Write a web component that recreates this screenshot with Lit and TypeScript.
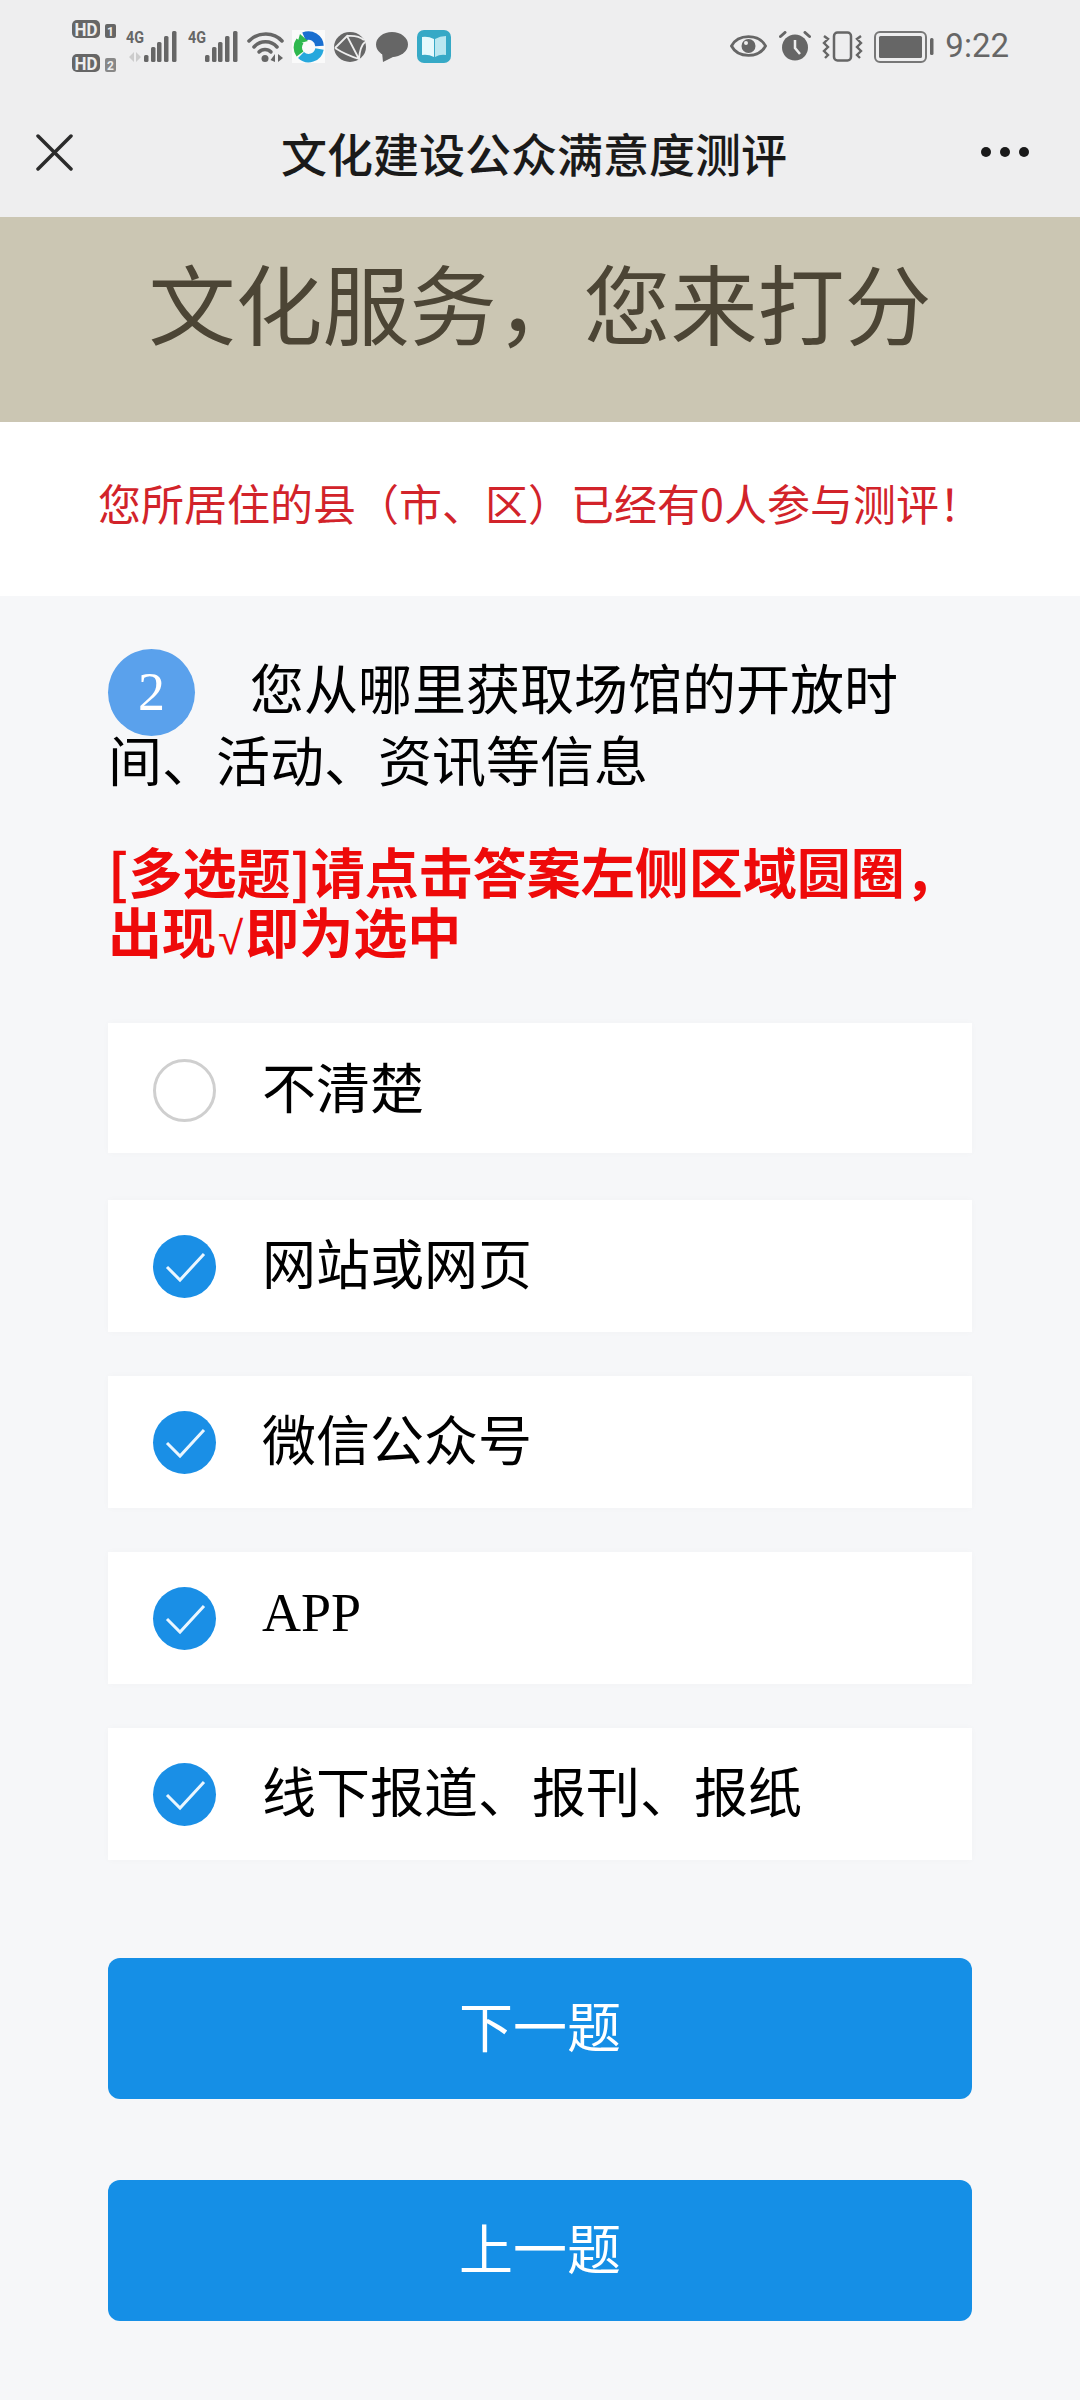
import { LitElement, html, css, svg } from "lit";
import { customElement } from "lit/decorators.js";

const options = [
  { label: "不清楚", checked: false },
  { label: "网站或网页", checked: true },
  { label: "微信公众号", checked: true },
  { label: "APP", checked: true },
  { label: "线下报道、报刊、报纸", checked: true },
];

const bars = (x: number) => {
  const offs = [0, 7, 13, 20, 28];
  const hs = [7, 15, 20, 26, 31];
  return offs.map(
    (o, i) => svg`<rect x=${x + o} y=${32 - hs[i]} width="4.5" height=${hs[i]} rx="1.5"/>`
  );
};

const fourG = svg`<text x="0" y="13" font-family="Roboto" font-size="17" font-weight="700" textLength="18" lengthAdjust="spacingAndGlyphs">4G</text>`;

@customElement("app-root")
export class AppRoot extends LitElement {
  static styles = css`
    :host { display: block; width: 1080px; height: 2400px; background: #f6f7f9; overflow: hidden;
      font-family: "Liberation Serif", "Noto Sans CJK SC", serif; color: #000; }
    .top { height: 217px; background: #eeeeef; display: flex; flex-direction: column; }
    .status { height: 88px; flex: none; display: flex; justify-content: space-between; align-items: flex-start; padding: 18px 71px 0 72px; box-sizing: border-box; color: #666; }
    .status svg { display: block; fill: #666; flex: none; }
    .time { font: 33px "Roboto", sans-serif; color: #666; line-height: 40px; margin-left: 11px; margin-top: 8px; }
    .sr, .sl { display: flex; align-items: flex-start; }
    .sig1 { margin-left: 10px; margin-top: 6px; }
    .sig2 { margin-left: 10px; margin-top: 6px; }
    .wifi { margin-left: 9px; margin-top: 13px; }
    .app { margin-left: 7px; margin-top: 12px; }
    .globe { margin-left: 9px; margin-top: 14px; }
    .chat { margin-left: 10px; margin-top: 14px; }
    .book { margin-left: 9px; margin-top: 12px; }
    .eye { margin-top: 15px; }
    .alarm { margin-left: 12px; margin-top: 13px; }
    .vib { margin-left: 11px; margin-top: 13px; }
    .bat { margin-left: 11px; margin-top: 13px; }
    .nav { flex: 1; display: flex; align-items: center; justify-content: space-between; padding: 0 51px 1px 36px; }
    .nav h1 { margin: 0 0 0 14px; font: 500 46px "Noto Sans CJK SC", sans-serif; color: #1a1a1a; line-height: 60px; }
    .banner { height: 205px; box-sizing: border-box; padding-bottom: 38px; background: #cbc6b3; color: #4c4535; font: 400 87px "Noto Sans CJK SC", sans-serif; display: flex; align-items: center; justify-content: center; }
    .notice { height: 174px; box-sizing: border-box; padding-bottom: 14px; background: #fff; color: #d2232a; font: 43px "Noto Sans CJK SC", sans-serif; display: flex; align-items: center; justify-content: center; }
    .body { padding: 52px 108px 0; }
    .q { font-size: 54px; line-height: 72px; position: relative; padding-top: 8px; text-indent: 142px; }
    .num { position: absolute; left: 0; top: 1px; width: 87px; height: 87px; border-radius: 50%; background: #5aa1ec; color: #fff; font-size: 54px; text-indent: 0; display: flex; align-items: center; justify-content: center; padding-bottom: 2px; box-sizing: border-box; }
    .warn { margin-top: 41px; font: 700 54px/60px "Noto Sans CJK SC", sans-serif; color: #ee0a0a; }
    .warn .root { font-family: "Liberation Sans", sans-serif; font-weight: 400; font-size: 46px; margin: 0 2px; }
    .list { margin-top: 55px; display: flex; flex-direction: column; gap: 44px; }
    .opt { height: 132px; box-sizing: border-box; background: #fff; display: flex; align-items: center; padding-left: 45px; font-size: 54px; gap: 46px; box-shadow: 0 0 8px rgba(0,0,0,.025); }
    .opt:first-child { height: 130px; margin-bottom: 3px; padding-top: 5px; }
    .opt .label { padding-bottom: 10px; }
    .mark { width: 63px; height: 63px; flex: none; box-sizing: border-box; border-radius: 50%; border: 3px solid #cfcfcf; }
    .mark.on { background: #1a8fe6; border: 0; }
    .mark svg { display: block; }
    .btns { margin-top: 98px; display: flex; flex-direction: column; gap: 81px; }
    .btn { height: 141px; box-sizing: border-box; padding-bottom: 8px; border-radius: 12px; background: #158fe6; color: #fff; font-size: 54px; display: flex; align-items: center; justify-content: center; }
  `;

  render() {
    return html`
      <div class="top">
        <div class="status">
          <div class="sl">
            <svg width="44" height="56" viewBox="0 0 44 56">
              <rect x="0" y="2" width="28" height="18" rx="5"/><rect x="33" y="6" width="11" height="14" rx="2"/>
              <rect x="0" y="36" width="28" height="18" rx="5"/><rect x="33" y="40" width="11" height="14" rx="2" fill="#888"/>
              <g fill="#eee" font-family="Roboto" font-size="18" font-weight="700"><text x="2.500" y="17.500" textLength="23" lengthAdjust="spacingAndGlyphs">HD</text><text x="2.500" y="51.500" textLength="23" lengthAdjust="spacingAndGlyphs">HD</text></g>
              <g fill="#eee" font-family="Roboto" font-size="12" font-weight="700"><text x="35" y="17.500">1</text><text x="35" y="51.500">2</text></g>
            </svg>
            <svg class="sig1" width="52" height="39" viewBox="0 -6 52 39">
              ${fourG}
              <path d="M8 22 V32 L3 27z M10 22 V32 L15 27z" fill="#ccc"/>
              ${bars(18)}
            </svg>
            <svg class="sig2" width="50" height="39" viewBox="0 -6 50 39">
              ${fourG}
              ${bars(17)}
            </svg>
            <svg class="wifi" width="38" height="32" viewBox="0 0 38 32">
              <g fill="none" stroke="#666" stroke-width="3.500" stroke-linecap="round">
                <path d="M2 10 C11 0.500 27 0.500 35 10"/><path d="M7 16 C13 9 24 9 30 16"/><path d="M12 21 C15 17.500 21 17.500 24 21"/>
              </g>
              <circle cx="18" cy="27.500" r="3.500"/>
              <path d="M28 31 v-8 l-4.500 6z M31 23 v8 l5 -4z"/>
            </svg>
            <svg class="app" width="33" height="33" viewBox="0 0 33 33">
              <rect width="33" height="33" fill="#fafafa"/>
              <g fill="none" stroke-width="8.500">
                <path d="M12 6.500 A11 11 0 0 1 27.500 16" stroke="#1a6fd0"/>
                <path d="M27.500 19 A11 11 0 0 1 9 25" stroke="#27a8dd"/>
                <path d="M8 24 A11 11 0 0 1 8 11" stroke="#2eb84e"/>
              </g>
              <path d="M8 4 L16 11 L5 14z" fill="#2eb84e"/>
            </svg>
            <svg class="globe" width="32" height="30" viewBox="0 0 32 30">
              <ellipse cx="16" cy="15" rx="16" ry="15"/>
              <path d="M1 16 L13 4 L25 27 Q26 14 31 10 M13 4 Q24 3 30 8 M1 16 Q12 23 25 27" fill="none" stroke="#eee" stroke-width="1.800"/>
            </svg>
            <svg class="chat" width="32" height="30" viewBox="0 0 32 30">
              <ellipse cx="16" cy="12.500" rx="16" ry="12.500"/><path d="M6 20 L7 30 L19 24z"/>
            </svg>
            <svg class="book" width="34" height="33" viewBox="0 0 34 33">
              <rect width="34" height="33" rx="7" fill="#36a9c6"/>
              <path d="M5 7 Q11 6 17 9 V27 Q11 24 5 25z" fill="#e6f9fc"/>
              <path d="M18 9 Q23 6 29 6 V25 Q23 24 18 27z" fill="#b9e7f0"/>
            </svg>
          </div>
          <div class="sr">
            <svg class="eye" width="37" height="26" viewBox="0 0 37 26">
              <path d="M1.500 13 C8 0.500 29 0.500 35.500 13 C29 25.500 8 25.500 1.500 13z" fill="none" stroke="#666" stroke-width="2.800"/>
              <circle cx="18.500" cy="13" r="7"/><circle cx="16" cy="10" r="2" fill="#eee"/>
            </svg>
            <svg class="alarm" width="32" height="30" viewBox="0 0 32 30">
              <circle cx="16" cy="16.500" r="13"/>
              <path d="M16 9 V17 L21 23" fill="none" stroke="#eee" stroke-width="2.500"/>
              <path d="M1.500 5.500 L6 1.500 M30.500 5.500 L26 1.500" fill="none" stroke="#666" stroke-width="3" stroke-linecap="round"/>
            </svg>
            <svg class="vib" width="41" height="31" viewBox="0 0 41 31">
              <rect x="12" y="1.500" width="17" height="28" rx="3.500" fill="none" stroke="#666" stroke-width="2.500"/>
              <path d="M2 5 l4 3 -4 4 4 4 -4 4 4 4 -3 3 M39 5 l-4 3 4 4 -4 4 4 4 -4 4 3 3" fill="none" stroke="#666" stroke-width="2.400"/>
            </svg>
            <svg class="bat" width="60" height="32" viewBox="0 0 60 32">
              <rect x="1" y="1" width="51" height="30" rx="5" fill="none" stroke="#777" stroke-width="2"/>
              <rect x="5" y="5" width="43" height="22" rx="1.500"/>
              <rect x="56" y="7" width="3.500" height="17" rx="1.500"/>
            </svg>
            <div class="time">9:22</div>
          </div>
        </div>
        <div class="nav">
          <svg width="37" height="37" viewBox="0 0 37 37"><path d="M2 2 L35 35 M35 2 L2 35" stroke="#2b2b2b" stroke-width="3.500" stroke-linecap="round" fill="none"/></svg>
          <h1>文化建设公众满意度测评</h1>
          <svg width="48" height="12" viewBox="0 0 48 12" fill="#1a1a1a"><circle cx="5" cy="6" r="5"/><circle cx="24" cy="6" r="5"/><circle cx="43" cy="6" r="5"/></svg>
        </div>
      </div>
      <div class="banner">文化服务，您来打分</div>
      <div class="notice">您所居住的县（市、区）已经有0人参与测评！</div>
      <div class="body">
        <div class="q"><span class="num">2</span>您从哪里获取场馆的开放时间、活动、资讯等信息</div>
        <div class="warn">[多选题]请点击答案左侧区域圆圈，出现<span class="root">√</span>即为选中</div>
        <div class="list">
          ${options.map((o) => html`
            <div class="opt">
              <span class="mark ${o.checked ? "on" : ""}">
                ${o.checked ? html`<svg width="63" height="63" viewBox="0 0 63 63"><path d="M14 32 L27 45 L51 19" fill="none" stroke="#eaf6ff" stroke-width="3"/></svg>` : ""}
              </span>
              <span class="label">${o.label}</span>
            </div>`)}
        </div>
        <div class="btns">
          <div class="btn">下一题</div>
          <div class="btn">上一题</div>
        </div>
      </div>
    `;
  }
}
